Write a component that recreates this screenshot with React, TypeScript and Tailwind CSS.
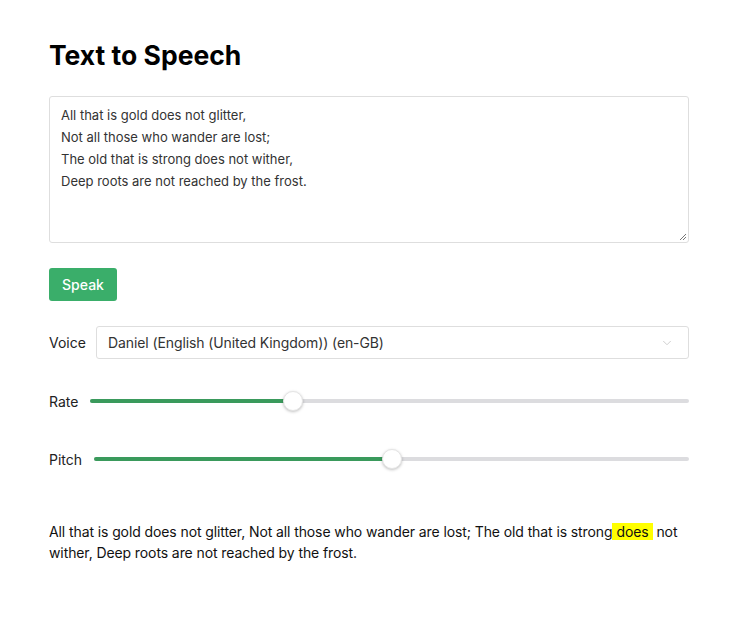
import { ChevronDown } from "lucide-react";

const poem = [
  "All that is gold does not glitter,",
  "Not all those who wander are lost;",
  "The old that is strong does not wither,",
  "Deep roots are not reached by the frost.",
];

function Slider({ label, value, min, max }: { label: string; value: number; min: number; max: number }) {
  const pct = (value - min) / (max - min);
  return (
    <div className="flex items-center h-5">
      <span className="text-[14px] text-[#222] mr-[12px]">{label}</span>
      <div className="relative flex-1 h-5 flex items-center">
        <div className="w-full h-[4px] rounded-full bg-[#dcdcdf] overflow-hidden flex">
          <div className="h-full bg-[#3a9a5c]" style={{ width: `calc(10px + ${pct} * (100% - 20px))` }} />
        </div>
        <div
          className="absolute top-0 w-5 h-5 rounded-full bg-white shadow-[0_1px_3px_rgba(0,0,0,0.25)] border border-[#e5e5e5]"
          style={{ left: `calc(${pct} * (100% - 20px))` }}
        />
      </div>
    </div>
  );
}

export default function App() {
  return (
    <div className="min-h-screen bg-white px-[49px] pt-[38px] font-['Inter',sans-serif] text-[#222]">
      <div className="w-[640px]">
        <h1 className="text-[26.5px] font-bold leading-[34px] text-black">Text to Speech</h1>

        <div className="mt-[24px] h-[147px] rounded-[3px] border border-[#dedede] px-[11px] py-[7px] overflow-hidden relative">
          {poem.map((line) => (
            <div key={line} className="text-[13px] leading-[22px] text-[#333]">
              {line}
            </div>
          ))}
          <svg className="absolute right-[1px] bottom-[1px]" width="9" height="9" viewBox="0 0 9 9">
            <path d="M8 2 L2 8 M8 5 L5 8" stroke="#777" strokeWidth="1" />
          </svg>
        </div>

        <button className="mt-[25px] h-[33px] w-[68px] rounded-[3px] bg-[#3aae6a] text-[14px] font-medium text-white">
          Speak
        </button>

        <div className="mt-[25px] flex items-center">
          <span className="text-[14px] w-[47px]">Voice</span>
          <div className="flex-1 h-[33px] rounded-[3px] border border-[#dedede] flex items-center justify-between pl-[11px] pr-[14px]">
            <span className="text-[14px] text-[#333] tracking-[-0.1px]">Daniel (English (United Kingdom)) (en-GB)</span>
            <ChevronDown className="w-[14px] h-[14px] text-[#c8c8c8]" strokeWidth={1.5} />
          </div>
        </div>

        <div className="mt-[32px]">
          <Slider label="Rate" value={1} min={0.5} max={2} />
        </div>
        <div className="mt-[38px]">
          <Slider label="Pitch" value={1} min={0} max={2} />
        </div>

        <p className="mt-[52px] text-[14px] leading-[21px] text-[#111] tracking-[-0.1px]">
          All that is gold does not glitter, Not all those who wander are lost; The old that is strong
          <span className="bg-[#ffff00] px-[4px]">does</span> not wither, Deep roots are not reached by the frost.
        </p>
      </div>
    </div>
  );
}
